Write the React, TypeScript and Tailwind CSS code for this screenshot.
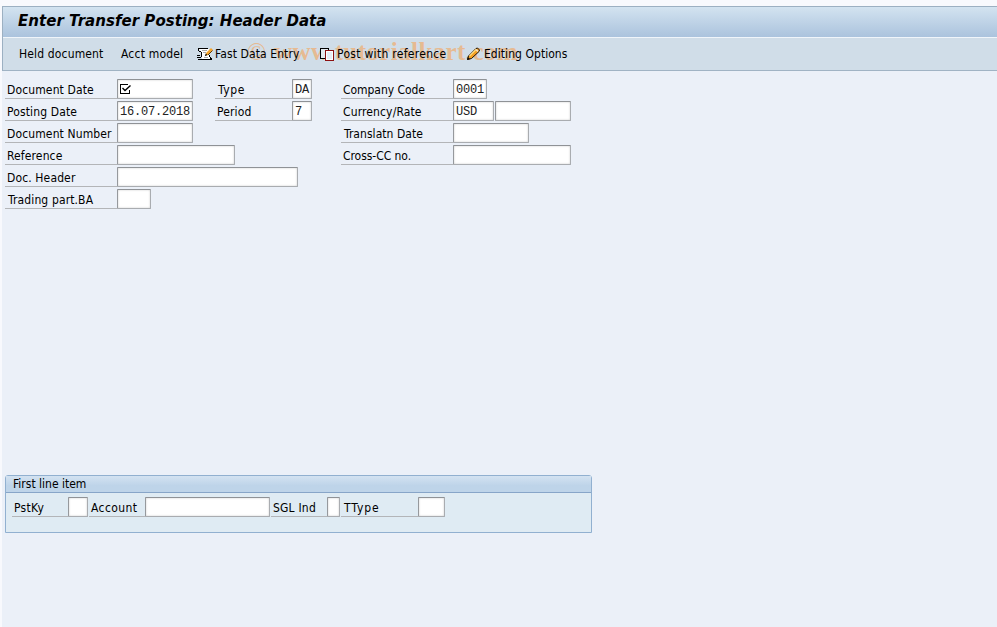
import clsx from "clsx";
import { type PropsWithChildren } from "react";

const FastEntryIcon = () => (
  <svg width="16" height="15" viewBox="0 0 16 15" shapeRendering="crispEdges">
    <path d="M2 2h10v8l2 2H5V8L3 4z" fill="#fff" />
    <path d="M1 1.5h10M1.500 2v2M2 4.500h2M4.500 5v5M12.500 8v2M13.500 10v2M5 12.500h9M14.500 11v2M0 8.500h3M0 10.500h4M1 12.500h4" stroke="#000" fill="none" />
    <path d="M5 3.500h5M6 5.500h3M7 10.500h4" stroke="#a9a9a9" />
    <path d="M8 9l1-3 5-5 2 2-5 5z" fill="#f5a42a" shapeRendering="auto" />
    <path d="M7.800 9.200l1-2.700 1.700 1.500z" fill="#111" shapeRendering="auto" />
    <path d="M11 8l4.500-4.500" stroke="#5a3a10" fill="none" shapeRendering="auto" />
  </svg>
);

const CopyIcon = () => (
  <svg width="15" height="15" viewBox="0 0 15 15" shapeRendering="crispEdges">
    <path d="M.5 1.500h8v10h-8z" fill="#e3e9ee" stroke="#000" />
    <path d="M5.500 3.500h8v10h-8z" fill="#fff" stroke="#8b1010" />
    <path d="M7 5h5v7H7z" fill="#e6edf5" />
  </svg>
);

const PencilIcon = () => (
  <svg width="15" height="14" viewBox="0 0 15 14">
    <path d="M1.500 12.500l1-3.500 7.500-7.500 1.500-.5 2 2-.5 1.500-7.500 7z" fill="#f6a021" stroke="#1c1208" />
    <path d="M3.500 9l6.500-6.500" stroke="#ffdc80" strokeWidth="1.3" />
    <path d="M10 2.500l2 2" stroke="#f6e3d0" strokeWidth="1.5" />
    <path d="M1 13l.8-3 2.200 2z" fill="#111" />
  </svg>
);

const CheckIcon = () => (
  <svg width="11" height="11" viewBox="0 0 11 11" shapeRendering="crispEdges">
    <path d="M8 .5H.5v9h9V6" fill="none" stroke="#000" />
    <path d="M2.500 4l2.500 2.500L10.500 1.500" fill="none" stroke="#000" strokeWidth="1.4" shapeRendering="auto" />
  </svg>
);

type LabelProps = { className?: string; text: string };

const Label = ({ className, text }: LabelProps) => (
  <span
    className={clsx(
      "block h-5 shrink-0 whitespace-nowrap border-b border-[#b3b5b8] leading-[22px]",
      className,
    )}
  >
    {text}
  </span>
);

const Field = ({ className, children }: PropsWithChildren<{ className?: string }>) => (
  <div
    className={clsx(
      "flex h-5 shrink-0 items-center overflow-hidden rounded-[1px] border border-t-[#8f9296] border-r-[#a9acb0] border-b-[#a9acb0] border-l-[#96999d] bg-white pt-px pl-[2px] font-['Liberation_Mono',monospace] text-[12px] leading-none tracking-[-0.2px] whitespace-pre text-[#222] shadow-[inset_0_0_2px_#c4c4c4]",
      className,
    )}
  >
    {children}
  </div>
);

const Row = ({ children }: PropsWithChildren) => <div className="flex h-5">{children}</div>;

const Toolbar = () => (
  <div className="relative flex h-[33px] items-center border-b border-[#a0b3c4] bg-[#d0dde8] pl-4">
    <div className="pointer-events-none absolute top-0 left-[244px] flex font-['Liberation_Serif',serif] text-[25px] leading-[27px] whitespace-nowrap text-[#e6ba92]">
      <span className="w-[27px]">©</span>
      <span className="font-bold tracking-[0.4px]">www.tutorialkart.com</span>
    </div>
    <span className="relative w-[102px] tracking-[0.15px]">Held document</span>
    <span className="relative w-[76px] tracking-[0.2px]">Acct model</span>
    <span className="relative">
      <FastEntryIcon />
    </span>
    <span className="relative ml-[2px] w-[105px] tracking-[0.1px]">Fast Data Entry</span>
    <span className="relative">
      <CopyIcon />
    </span>
    <span className="relative ml-[2px] w-[129px] tracking-[0.3px]">Post with reference</span>
    <span className="relative">
      <PencilIcon />
    </span>
    <span className="relative ml-[3px] tracking-[0.05px]">Editing Options</span>
  </div>
);

const HeaderForm = () => (
  <div className="flex pt-2 pl-[3px]">
    <div className="flex w-[210px] flex-col gap-[2px]">
      <Row>
        <Label className="w-28 pl-[2px]" text="Document Date" />
        <Field className="w-[76px]">
          <CheckIcon />
        </Field>
      </Row>
      <Row>
        <Label className="w-28 pl-[2px]" text="Posting Date" />
        <Field className="w-[76px]">16.07.2018</Field>
      </Row>
      <Row>
        <Label className="w-28 pl-[2px]" text="Document Number" />
        <Field className="w-[76px]" />
      </Row>
      <Row>
        <Label className="w-28 pl-[2px]" text="Reference" />
        <Field className="w-[118px]" />
      </Row>
      <Row>
        <Label className="w-28 pl-[2px]" text="Doc. Header" />
        <Field className="w-[181px]" />
      </Row>
      <Row>
        <Label className="w-28 pl-[3px]" text="Trading part.BA" />
        <Field className="w-[34px]" />
      </Row>
    </div>
    <div className="flex w-[126px] flex-col gap-[2px]">
      <Row>
        <Label className="w-[77px] pl-[3px] tracking-[0.6px]" text="Type" />
        <Field className="w-5">DA</Field>
      </Row>
      <Row>
        <Label className="w-[77px] pl-[2px]" text="Period" />
        <Field className="w-5">7</Field>
      </Row>
    </div>
    <div className="flex flex-col gap-[2px]">
      <Row>
        <Label className="w-28 pl-[2px] tracking-[-0.05px]" text="Company Code" />
        <Field className="w-[34px]">0001</Field>
      </Row>
      <Row>
        <Label className="w-28 pl-[2px]" text="Currency/Rate" />
        <Field className="mr-px w-[41px]">USD</Field>
        <Field className="w-[76px]" />
      </Row>
      <Row>
        <Label className="w-28 pl-[3px] tracking-[0.05px]" text="Translatn Date" />
        <Field className="w-[76px]" />
      </Row>
      <Row>
        <Label className="w-28 pl-[2px] tracking-[-0.05px]" text="Cross-CC no." />
        <Field className="w-[118px]" />
      </Row>
    </div>
  </div>
);

const LineItem = () => (
  <div className="mt-[266px] ml-[3px] h-[58px] w-[587px] rounded-t-[3px] border border-[#91b0d0] bg-[#dfebf3]">
    <div className="h-[17px] border-b border-[#87a5c8] bg-linear-to-b from-[#d3e2f1] to-[#bed4e9] to-60% pl-[7px] leading-4 tracking-[0px]">
      First line item
    </div>
    <div className="flex pt-1 pl-[6px]">
      <Label className="w-14 pl-[2px] tracking-[0.3px]" text="PstKy" />
      <Field className="mr-px w-5" />
      <Label className="w-14 pl-[2px] tracking-[0.4px]" text="Account" />
      <Field className="mr-px w-[125px]" />
      <Label className="w-14 pl-[2px] tracking-[0.2px]" text="SGL Ind" />
      <Field className="mr-px w-[13px]" />
      <Label className="w-[77px] pl-[3px] tracking-[0.9px]" text="TType" />
      <Field className="w-[27px]" />
    </div>
  </div>
);

export default function App() {
  return (
    <div className="h-[627px] w-[997px] overflow-hidden border-l-2 border-[#f8f9fd] bg-[#ebf0f8] font-['DejaVu_Sans_Condensed','DejaVu_Sans',sans-serif] text-[12px] tracking-[0.13px] text-black">
      <div className="h-[6px] bg-[#f8f9fd]" />
      <div className="border-t border-l border-[#9cb0c2]">
        <div className="h-[31px] border-b border-[#f0f5fa] bg-linear-to-b from-[#d3e3f0] to-[#abc3dd] pl-[15px] font-['DejaVu_Sans',sans-serif] text-[15px] leading-[28px] font-bold tracking-[0.03px] italic">
          Enter Transfer Posting: Header Data
        </div>
        <Toolbar />
      </div>
      <HeaderForm />
      <LineItem />
    </div>
  );
}
